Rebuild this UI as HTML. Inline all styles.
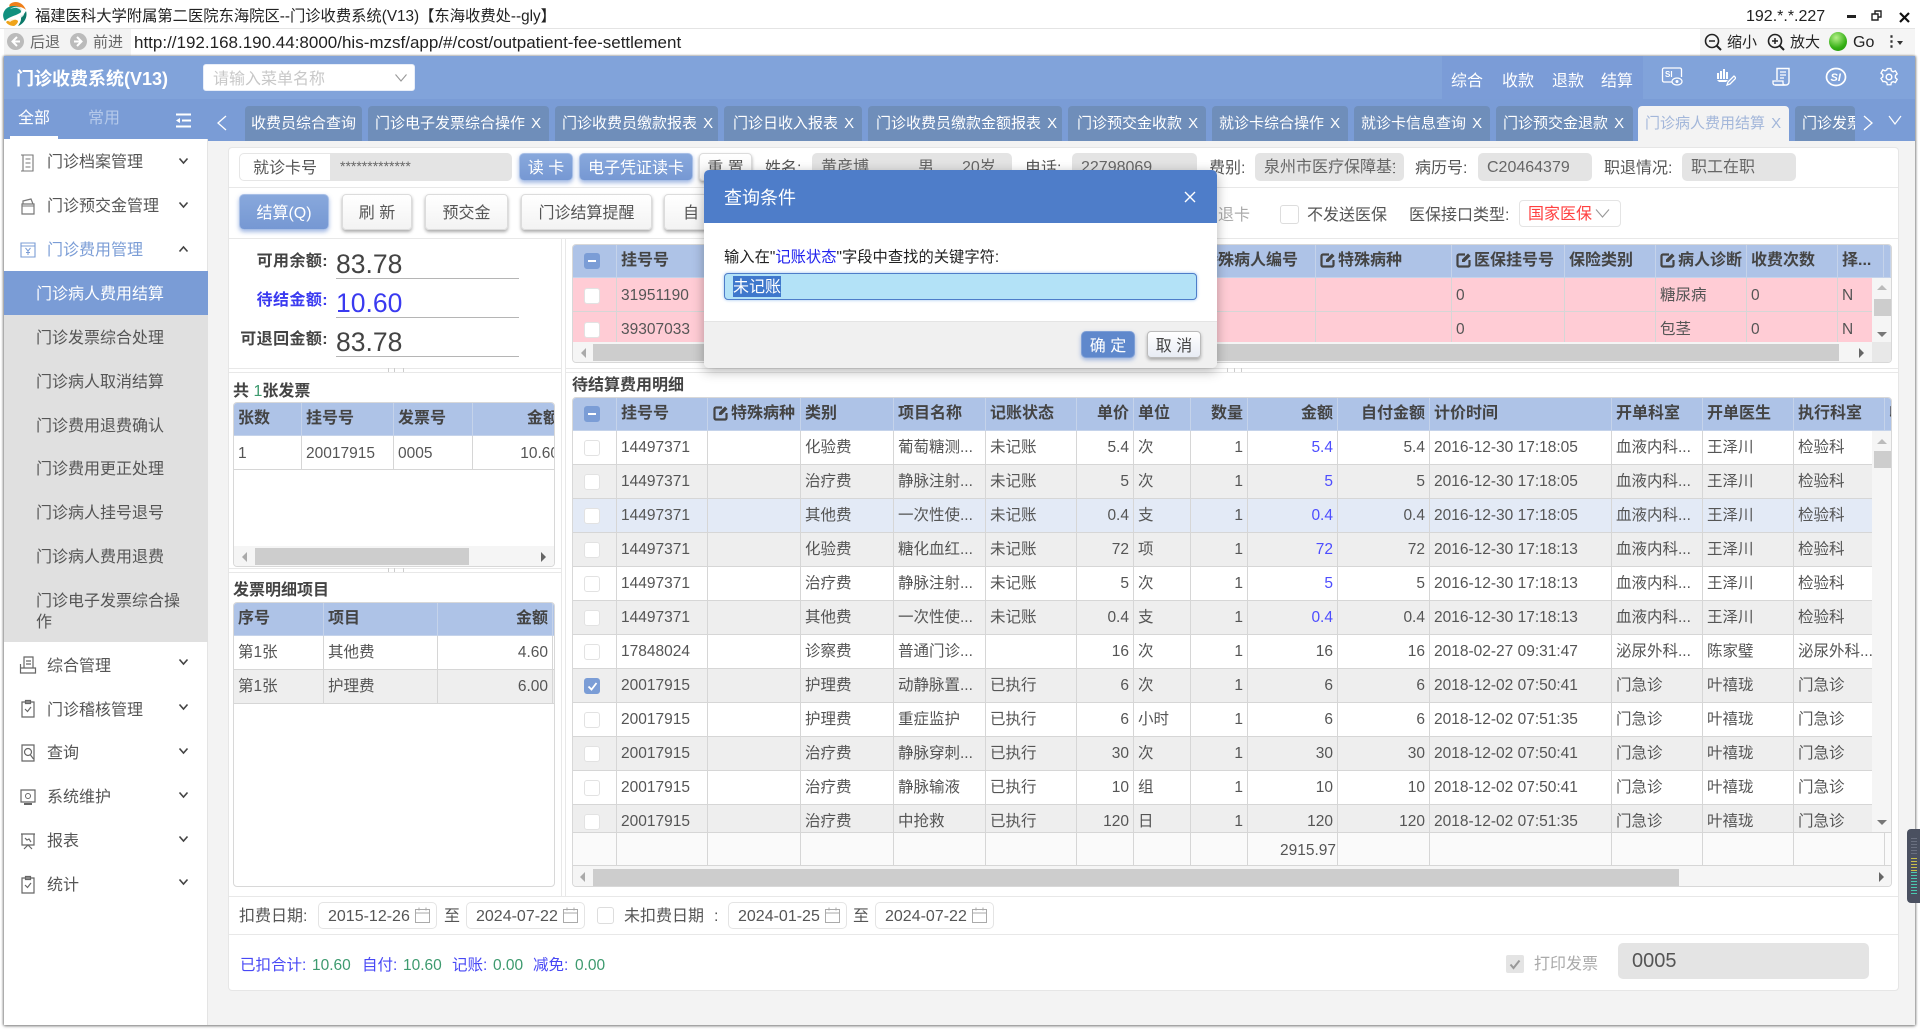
<!DOCTYPE html>
<html lang="zh-CN"><head><meta charset="utf-8"><title>门诊收费系统</title>
<style>
*{box-sizing:border-box}
html,body{margin:0;padding:0;width:1920px;height:1030px;overflow:hidden;background:#fff;font-family:"Liberation Sans","Noto Sans CJK SC",sans-serif;color:#555;font-size:16px}
.a{position:absolute}
.t{position:absolute;white-space:nowrap;line-height:20px;height:20px}
.w{color:#fff}
.tab{position:absolute;top:106px;height:35px;background:#6f8eba;border-radius:4px 4px 0 0;color:#fff;font-size:15px;line-height:36px;white-space:nowrap;overflow:hidden;word-spacing:2px}
.tab span{position:absolute;top:0}
.inp{position:absolute;background:#e4e4e4;border-radius:5px;top:153px;height:28px;color:#666;line-height:30px;padding-left:9px;overflow:hidden;white-space:nowrap}
.bb{position:absolute;background:linear-gradient(#88a8dc,#7698d3);border:1px solid #a8bfe6;border-radius:5px;color:#fff;text-align:center;box-shadow:0 2px 4px rgba(90,130,205,.55)}
.wb{position:absolute;background:linear-gradient(#fff,#f3f3f3);border:1px solid #dcdcdc;border-radius:4px;color:#555;text-align:center;box-shadow:0 2px 3px #aaa}
.menu{position:absolute;left:47px;line-height:22px;height:22px;white-space:nowrap;color:#555}
.sub{position:absolute;left:36px;line-height:22px;white-space:nowrap;color:#555}
.chev{position:absolute;left:178px;width:11px;height:8px}
.ic{position:absolute;left:19px;width:18px;height:20px}
.grid{position:absolute;overflow:hidden}
table{border-collapse:separate;border-spacing:0;table-layout:fixed;position:absolute;left:0}
td,th{height:34px;padding:0 4px;border-right:1px solid #d6d6d6;border-bottom:1px solid #d6d6d6;white-space:nowrap;overflow:hidden;font-size:15.5px;line-height:20px;font-weight:400;text-align:left;color:#555}
th{background:#aec3e7;color:#444;font-size:16px;font-weight:700;border-right:1px solid #c5d3ea;border-bottom:1px solid #c5d3ea;height:33px;padding-bottom:0}
.mh th{padding-bottom:1px}
.pt td{padding-top:2px}
.r{text-align:right}
.g td{background:#eee}
.h td{background:#e3eaf6}
.p td{background:#ffccd5}
.bl{color:#4d4dff}
.cb{display:block;width:16px;height:16px;background:#fff;border:1px solid #e2e2e2;border-radius:3px;margin-left:7px;position:relative}
.cb.m{background:#7b9dd6;border-color:#7b9dd6}
.cb.m:after{content:"";position:absolute;left:3px;top:6px;width:8px;height:2px;background:#fff}
.cb.c{background:#7b9dd6;border-color:#7b9dd6}
td .ed,th .ed{vertical-align:-3px;margin-right:2px}
.sb{position:absolute;background:#cdcdcd}
.date{position:absolute;top:902px;height:27px;background:#fff;border:1px solid #e4e4e4;border-radius:5px;color:#555;line-height:27px;padding-left:9px;width:119px;font-size:16px}
.date svg{position:absolute;left:96px;top:4px}
.gr{color:#3d9a6e}
.blu{color:#4848f5}
.vl{position:absolute;background:#e8e8e8}
.under{position:absolute;left:336px;width:183px;height:1px;background:#b5b5b5}
.bal{position:absolute;right:1592px;white-space:nowrap;font-weight:700;line-height:20px;color:#444;letter-spacing:.4px}
.val{position:absolute;left:336px;font-size:26.5px;line-height:34px;color:#444}
</style></head><body>

<!-- title bar -->
<svg class="a" style="left:2px;top:1px" width="25" height="26" viewBox="0 0 25 26">
<path d="M8 3C13 -1 21 1 24 9 20 5 13 5 9 8 7 6 7 4 8 3z" fill="#ef7f1a"/>
<path d="M3 20C6 16 13 15 18 12 21 10 20 7 17 6 12 4 6 5 3 9 0 13 1 17 3 20z" fill="#11907f"/>
<path d="M24 10C26 16 22 23 16 25 19 21 20 17 18 15 21 14 23 12 24 10z" fill="#0c7a6a"/>
<path d="M4 21C8 17 14 18 16 20 16 22 14 24 12 25 8 25 5 23 4 21z" fill="#efa41a"/>
<path d="M8 8c4-3 9-3 13 0 2 2 2 6-1 8-3 3-9 2-12 5-1-1-2-1-3-1 3-4 10-4 13-7 2-2 1-4-1-5-3-2-6-1-9 0z" fill="#fff" opacity=".85"/>
</svg>
<div class="t" style="left:35px;top:7px;font-size:15.3px;color:#222">福建医科大学附属第二医院东海院区--门诊收费系统(V13)【东海收费处--gly】</div>
<div class="t" style="left:1746px;top:7px;font-size:16px;color:#222">192.*.*.227</div>
<div class="a" style="left:1847px;top:15px;width:9px;height:3px;background:#222"></div>
<svg class="a" style="left:1871px;top:10px" width="11" height="11" viewBox="0 0 11 11"><path d="M1 4h6v6H1zM4 4V1h6v6H7" fill="none" stroke="#222" stroke-width="1.4"/></svg>
<svg class="a" style="left:1899px;top:12px" width="11" height="11" viewBox="0 0 11 11"><path d="M1 1l9 9M10 1l-9 9" stroke="#111" stroke-width="2.2"/></svg>
<div class="a" style="left:0;top:28px;width:1915px;height:1px;background:#e4e4e4"></div>

<!-- address bar -->
<div class="a" style="left:4px;top:29px;width:127px;height:27px;background:#f3f3f3"></div>
<div class="a" style="left:1700px;top:29px;width:215px;height:27px;background:#f5f5f5"></div>
<svg class="a" style="left:6px;top:32px" width="19" height="19" viewBox="0 0 19 19"><circle cx="9.5" cy="9.5" r="8.5" fill="#bbb"/><path d="M11 5L6.5 9.500 11 14" fill="none" stroke="#fff" stroke-width="2"/><path d="M7 9.5h7" stroke="#fff" stroke-width="2"/></svg>
<div class="t" style="left:30px;top:33px;font-size:15px;color:#666">后退</div>
<svg class="a" style="left:69px;top:32px" width="19" height="19" viewBox="0 0 19 19"><circle cx="9.500" cy="9.500" r="8.500" fill="#bbb"/><path d="M8 5l4.500 4.500L8 14" fill="none" stroke="#fff" stroke-width="2"/><path d="M5 9.500h7" stroke="#fff" stroke-width="2"/></svg>
<div class="t" style="left:93px;top:33px;font-size:15px;color:#666">前进</div>
<div class="t" style="left:134px;top:33px;font-size:17px;color:#222">http://192.168.190.44:8000/his-mzsf/app/#/cost/outpatient-fee-settlement</div>
<svg class="a" style="left:1704px;top:33px" width="18" height="18" viewBox="0 0 18 18"><circle cx="8" cy="8" r="6.500" fill="none" stroke="#222" stroke-width="1.600"/><path d="M5 8h6" stroke="#222" stroke-width="1.500"/><path d="M12.500 12.500L17 17" stroke="#222" stroke-width="2"/></svg>
<div class="t" style="left:1727px;top:33px;font-size:15px;color:#222">缩小</div>
<svg class="a" style="left:1767px;top:33px" width="18" height="18" viewBox="0 0 18 18"><circle cx="8" cy="8" r="6.500" fill="none" stroke="#222" stroke-width="1.600"/><path d="M5 8h6M8 5v6" stroke="#222" stroke-width="1.500"/><path d="M12.500 12.500L17 17" stroke="#222" stroke-width="2"/></svg>
<div class="t" style="left:1790px;top:33px;font-size:15px;color:#222">放大</div>
<div class="a" style="left:1829px;top:32px;width:18px;height:19px;border-radius:50%;background:radial-gradient(circle at 40% 30%,#b6f08a,#35b015 60%,#1f8a0a)"></div>
<div class="t" style="left:1853px;top:33px;font-size:16px;color:#222">Go</div>
<div class="t" style="left:1884px;top:32px;font-size:15px;color:#333;font-weight:700">⋮</div>
<div class="a" style="left:1897px;top:41px;border-left:3px solid transparent;border-right:3px solid transparent;border-top:4px solid #333"></div>

<!-- window base -->
<div class="a" style="left:4px;top:56px;width:1911px;height:969px;background:#f3f3f3;box-shadow:0 1px 3px #888,-1px 0 2px #aaa,1px 0 2px #aaa"></div>

<!-- header -->
<div class="a" style="left:4px;top:56px;width:1911px;height:43px;background:#81a3da"></div>
<div class="a" style="left:1442px;top:56px;width:201px;height:43px;background:#7b9cd7"></div>
<div class="t" style="left:16px;top:69px;font-size:18px;font-weight:700;color:#fff;line-height:21px">门诊收费系统(V13)</div>
<div class="a" style="left:203px;top:64px;width:212px;height:27px;background:#fff;border-radius:3px;border:1px solid #e8eef8;color:#c8c8c8;line-height:29px;padding-left:9px">请输入菜单名称
<svg class="a" style="left:191px;top:9px" width="12" height="8" viewBox="0 0 12 8"><path d="M.5.500L6 7 11.500.500" fill="none" stroke="#999" stroke-width="1.100"/></svg></div>
<div class="t w" style="left:1451px;top:72px">综合</div>
<div class="t w" style="left:1502px;top:72px">收款</div>
<div class="t w" style="left:1552px;top:72px">退款</div>
<div class="t w" style="left:1601px;top:72px">结算</div>
<svg class="a" style="left:1661px;top:67px" width="22" height="20" viewBox="0 0 22 20"><path d="M11 15H3a1.500 1.500 0 0 1-1.500-1.500v-11A1.500 1.500 0 0 1 3 1h16a1.500 1.500 0 0 1 1.500 1.500V10" fill="none" stroke="#fff" stroke-width="1.300"/><text x="4" y="10" font-size="8" font-weight="700" fill="#fff" font-family="Liberation Sans">SI</text><ellipse cx="16" cy="14.500" rx="5" ry="3.500" fill="#81a3da" stroke="#fff" stroke-width="1.200"/><circle cx="16" cy="14.500" r="1.500" fill="#fff"/></svg>
<svg class="a" style="left:1716px;top:68px" width="20" height="18" viewBox="0 0 20 18"><path d="M1 5h2v6H1zM4 3h2v8H4zM7 1h2v10H7zM10 4h2v7h-2z" fill="#fff"/><path d="M1 12h11l-2 2H3z" fill="#fff"/><path d="M12 14l6-6 2 2-6 6-3 1z" fill="none" stroke="#fff" stroke-width="1.300"/></svg>
<svg class="a" style="left:1772px;top:67px" width="19" height="20" viewBox="0 0 19 20"><path d="M5 13V1.500h12V15a3 3 0 0 1-3 3H3" fill="none" stroke="#fff" stroke-width="1.400"/><path d="M1 14h10v2a2 2 0 0 0 2 2H3a2 2 0 0 1-2-2zM8 5h6M8 8h6M8 11h4" fill="none" stroke="#fff" stroke-width="1.300"/></svg>
<svg class="a" style="left:1825px;top:67px" width="22" height="20" viewBox="0 0 22 20"><ellipse cx="11" cy="10" rx="9.500" ry="8.500" fill="none" stroke="#fff" stroke-width="1.700"/><text x="5.500" y="14" font-size="11" font-weight="700" font-style="italic" fill="#fff" font-family="Liberation Sans">SI</text></svg>
<svg class="a" style="left:1880px;top:67px" width="18" height="20" viewBox="0 0 18 20"><path d="M7 1.500h4l.5 2.500 2 1 2.500-1 2 3.500-2 1.700v2.600l2 1.700-2 3.500-2.500-1-2 1-.5 2.500H7l-.5-2.500-2-1L2 16l-2-3.500 2-1.700V8.200L0 6.500 2 3l2.500 1 2-1z" transform="translate(1 .2) scale(.9)" fill="none" stroke="#fff" stroke-width="1.500"/><circle cx="9" cy="10" r="2.800" fill="none" stroke="#fff" stroke-width="1.500"/></svg>

<!-- tabs bar -->
<div class="a" style="left:208px;top:99px;width:1707px;height:42px;background:#7a9cd6"></div>
<svg class="a" style="left:216px;top:114px" width="12" height="18" viewBox="0 0 12 18"><path d="M10 2L2 9l8 7" fill="none" stroke="#fff" stroke-width="1.300"/></svg>
<div class="tab" style="left:245px;width:117px"><span style="left:6px">收费员综合查询</span></div>
<div class="tab" style="left:368px;width:181px"><span style="left:7px">门诊电子发票综合操作 X</span></div>
<div class="tab" style="left:555px;width:163px"><span style="left:7px">门诊收费员缴款报表 X</span></div>
<div class="tab" style="left:724px;width:138px"><span style="left:9px">门诊日收入报表 X</span></div>
<div class="tab" style="left:868px;width:194px"><span style="left:8px">门诊收费员缴款金额报表 X</span></div>
<div class="tab" style="left:1068px;width:138px"><span style="left:9px">门诊预交金收款 X</span></div>
<div class="tab" style="left:1212px;width:136px"><span style="left:7px">就诊卡综合操作 X</span></div>
<div class="tab" style="left:1354px;width:136px"><span style="left:7px">就诊卡信息查询 X</span></div>
<div class="tab" style="left:1496px;width:137px"><span style="left:7px">门诊预交金退款 X</span></div>
<div class="tab" style="left:1638px;width:151px;background:#f3f3f3;color:#a3b7da"><span style="left:7px">门诊病人费用结算 X</span></div>
<div class="tab" style="left:1795px;width:60px"><span style="left:7px">门诊发票</span></div>
<svg class="a" style="left:1862px;top:114px" width="12" height="18" viewBox="0 0 12 18"><path d="M2 2l8 7-8 7" fill="none" stroke="#fff" stroke-width="1.300"/></svg>
<svg class="a" style="left:1888px;top:115px" width="14" height="11" viewBox="0 0 14 11"><path d="M1 1l6 8 6-8" fill="none" stroke="#fff" stroke-width="1.200"/></svg>

<!-- sidebar -->
<div class="a" style="left:4px;top:99px;width:204px;height:926px;background:#fff;border-right:1px solid #e4e4e4"></div>
<div class="a" style="left:4px;top:99px;width:204px;height:40px;background:#7a9cd6"></div>
<div class="t w" style="left:18px;top:109px">全部</div>
<div class="t" style="left:88px;top:109px;color:#b5c9ea">常用</div>
<div class="a" style="left:10px;top:136px;width:48px;height:3px;background:#fff"></div>
<svg class="a" style="left:176px;top:113px" width="16" height="15" viewBox="0 0 16 15"><path d="M0 1.500h15M6 7.500h9M0 13.500h15" stroke="#fff" stroke-width="2"/><path d="M4 5L0 7.500 4 10z" fill="#fff"/></svg>

<svg class="ic" style="top:153px" viewBox="0 0 18 20"><path d="M4 2h10v16H4zM6.500 6h5M6.500 10h5M6.500 14h5M2 2h2M2 18h2" fill="none" stroke="#777" stroke-width="1.100"/></svg>
<div class="menu" style="top:152px">门诊档案管理</div>
<svg class="chev" style="top:157px" viewBox="0 0 11 8"><path d="M1.500 1.500L5.500 6l4-4.500" fill="none" stroke="#444" stroke-width="1.600"/></svg>
<svg class="ic" style="top:197px" viewBox="0 0 18 20"><path d="M3 7h12v10H3zM4 7V4l8-2 2 5" fill="none" stroke="#777" stroke-width="1.200"/><path d="M3 9h12" stroke="#777"/></svg>
<div class="menu" style="top:196px">门诊预交金管理</div>
<svg class="chev" style="top:201px" viewBox="0 0 11 8"><path d="M1.500 1.500L5.500 6l4-4.500" fill="none" stroke="#444" stroke-width="1.600"/></svg>
<svg class="ic" style="top:240px" viewBox="0 0 18 20"><path d="M2 3h14v14H2zM2 6h14" fill="none" stroke="#7b9dd6" stroke-width="1.100"/><path d="M6.500 8l2.500 3 2.500-3M9 11v4M7 12.500h4" fill="none" stroke="#7b9dd6"/></svg>
<div class="menu" style="top:240px;color:#7b9dd6">门诊费用管理</div>
<svg class="chev" style="top:245px" viewBox="0 0 11 8"><path d="M1.500 6.500L5.500 2l4 4.500" fill="none" stroke="#444" stroke-width="1.600"/></svg>

<div class="a" style="left:4px;top:271px;width:204px;height:371px;background:#e0e0e0"></div>
<div class="a" style="left:4px;top:271px;width:204px;height:44px;background:#7a9cd6"></div>
<div class="sub" style="top:284px;color:#fff">门诊病人费用结算</div>
<div class="sub" style="top:328px">门诊发票综合处理</div>
<div class="sub" style="top:372px">门诊病人取消结算</div>
<div class="sub" style="top:416px">门诊费用退费确认</div>
<div class="sub" style="top:459px">门诊费用更正处理</div>
<div class="sub" style="top:503px">门诊病人挂号退号</div>
<div class="sub" style="top:547px">门诊病人费用退费</div>
<div class="sub" style="top:591px;white-space:normal;width:150px;line-height:21px">门诊电子发票综合操作</div>

<svg class="ic" style="top:655px" viewBox="0 0 18 20"><path d="M5 2h9v11H5zM1.500 9v9h15v-5h-15M7 6h5M7 9h5" fill="none" stroke="#666" stroke-width="1.200"/></svg>
<div class="menu" style="top:656px">综合管理</div>
<svg class="chev" style="top:658px;" viewBox="0 0 11 8"><path d="M1.500 1.500L5.500 6l4-4.500" fill="none" stroke="#444" stroke-width="1.600"/></svg>
<svg class="ic" style="top:699px" viewBox="0 0 18 20"><path d="M3 3h12v15H3zM6.500 1.500h5v3h-5zM6 10l2.500 2.500L12 8" fill="none" stroke="#666" stroke-width="1.200"/></svg>
<div class="menu" style="top:700px">门诊稽核管理</div>
<svg class="chev" style="top:703px" viewBox="0 0 11 8"><path d="M1.500 1.500L5.500 6l4-4.500" fill="none" stroke="#444" stroke-width="1.600"/></svg>
<svg class="ic" style="top:743px" viewBox="0 0 18 20"><path d="M3 2h12v16H3z" fill="none" stroke="#666" stroke-width="1.200"/><circle cx="9" cy="9" r="3.500" fill="none" stroke="#666" stroke-width="1.200"/><path d="M11.500 12l3 4" stroke="#666" stroke-width="1.200"/></svg>
<div class="menu" style="top:743px">查询</div>
<svg class="chev" style="top:747px" viewBox="0 0 11 8"><path d="M1.500 1.500L5.500 6l4-4.500" fill="none" stroke="#444" stroke-width="1.600"/></svg>
<svg class="ic" style="top:787px" viewBox="0 0 18 20"><path d="M2 3h14v12H2z" fill="none" stroke="#666" stroke-width="1.200"/><circle cx="9" cy="9" r="2.500" fill="none" stroke="#666"/><path d="M5 17h8" stroke="#666" stroke-width="2"/></svg>
<div class="menu" style="top:787px">系统维护</div>
<svg class="chev" style="top:791px" viewBox="0 0 11 8"><path d="M1.500 1.500L5.500 6l4-4.500" fill="none" stroke="#444" stroke-width="1.600"/></svg>
<svg class="ic" style="top:831px" viewBox="0 0 18 20"><path d="M2 3h14M3 3v11h12V3M5 18l4-4 4 4M6 7l2 2 2-1 2 3" fill="none" stroke="#666" stroke-width="1.200"/></svg>
<div class="menu" style="top:831px">报表</div>
<svg class="chev" style="top:835px" viewBox="0 0 11 8"><path d="M1.500 1.500L5.500 6l4-4.500" fill="none" stroke="#444" stroke-width="1.600"/></svg>
<svg class="ic" style="top:875px" viewBox="0 0 18 20"><path d="M3 3h12v15H3zM6.500 1.500h5v3h-5zM6 10l2.500 2.500L12 8" fill="none" stroke="#666" stroke-width="1.200"/></svg>
<div class="menu" style="top:875px">统计</div>
<svg class="chev" style="top:878px" viewBox="0 0 11 8"><path d="M1.500 1.500L5.500 6l4-4.500" fill="none" stroke="#444" stroke-width="1.600"/></svg>

<!-- content card -->
<div class="a" style="left:228px;top:147px;width:1671px;height:844px;background:#fff;border:1px solid #e6e6e6;border-radius:4px"></div>
<div class="vl" style="left:229px;top:187px;width:1669px;height:1px"></div>
<div class="vl" style="left:229px;top:238px;width:1669px;height:1px"></div>
<div class="vl" style="left:229px;top:896px;width:1669px;height:1px"></div>
<div class="vl" style="left:229px;top:934px;width:1669px;height:1px"></div>
<div class="vl" style="left:561px;top:238px;width:1px;height:658px"></div>
<div class="vl" style="left:565px;top:238px;width:1px;height:658px"></div>
<div class="vl" style="left:229px;top:368px;width:332px;height:1px"></div>
<div class="vl" style="left:229px;top:372px;width:332px;height:1px"></div>
<div class="vl" style="left:229px;top:568px;width:332px;height:1px"></div>
<div class="vl" style="left:229px;top:572px;width:332px;height:1px"></div>
<div class="vl" style="left:566px;top:368px;width:1332px;height:1px"></div>
<div class="vl" style="left:566px;top:372px;width:1332px;height:1px"></div>
<div class="vl" style="left:388px;top:368px;width:1px;height:4px;background:#ccc"></div><div class="vl" style="left:394px;top:368px;width:1px;height:4px;background:#ccc"></div><div class="vl" style="left:403px;top:368px;width:1px;height:4px;background:#ccc"></div>
<div class="vl" style="left:388px;top:568px;width:1px;height:4px;background:#ccc"></div><div class="vl" style="left:394px;top:568px;width:1px;height:4px;background:#ccc"></div><div class="vl" style="left:403px;top:568px;width:1px;height:4px;background:#ccc"></div>
<div class="vl" style="left:1227px;top:368px;width:1px;height:4px;background:#ccc"></div><div class="vl" style="left:1234px;top:368px;width:1px;height:4px;background:#ccc"></div><div class="vl" style="left:1241px;top:368px;width:1px;height:4px;background:#ccc"></div>

<!-- row 1 -->
<div class="a" style="left:239px;top:153px;width:92px;height:28px;background:#fff;border:1px solid #e6e6e6;border-radius:5px 0 0 5px;line-height:30px;padding-left:13px;color:#555">就诊卡号</div>
<div class="a" style="left:330px;top:153px;width:182px;height:28px;background:#e4e4e4;border-radius:0 5px 5px 0;color:#666;line-height:26px;padding-left:10px;font-size:14px">*************</div>
<div class="bb" style="left:519px;top:153px;width:54px;height:28px;line-height:30px">读 卡</div>
<div class="bb" style="left:579px;top:153px;width:114px;height:28px;line-height:30px">电子凭证读卡</div>
<div class="wb" style="left:699px;top:153px;width:53px;height:28px;line-height:30px">重 置</div>
<div class="t" style="left:765px;top:159px">姓名:</div>
<div class="inp" style="left:812px;width:200px">黄彦博<span class="a" style="left:106px;top:0">男</span><span class="a" style="left:150px;top:0">20岁</span></div>
<div class="t" style="left:1025px;top:159px">电话:</div>
<div class="inp" style="left:1072px;width:125px">22798069</div>
<div class="t" style="left:1209px;top:159px">费别:</div>
<div class="inp" style="left:1255px;width:149px"><span style="display:block;width:131px;overflow:hidden">泉州市医疗保障基金</span></div>
<div class="t" style="left:1415px;top:159px">病历号:</div>
<div class="inp" style="left:1478px;width:114px">C20464379</div>
<div class="t" style="left:1604px;top:159px">职退情况:</div>
<div class="inp" style="left:1682px;width:114px">职工在职</div>

<!-- row 2 -->
<div class="bb" style="left:239px;top:194px;width:90px;height:36px;line-height:38px">结算(Q)</div>
<div class="wb" style="left:342px;top:194px;width:70px;height:36px;line-height:38px">刷 新</div>
<div class="wb" style="left:425px;top:194px;width:83px;height:36px;line-height:38px">预交金</div>
<div class="wb" style="left:521px;top:194px;width:131px;height:36px;line-height:38px">门诊结算提醒</div>
<div class="wb" style="left:664px;top:194px;width:90px;height:36px;line-height:38px;text-align:left;padding-left:18px">自</div>
<div class="t" style="left:1218px;top:206px;color:#aaa">退卡</div>
<div class="a" style="left:1280px;top:205px;width:19px;height:19px;border:1px solid #ddd;border-radius:3px;background:#fff"></div>
<div class="t" style="left:1307px;top:206px">不发送医保</div>
<div class="t" style="left:1409px;top:206px">医保接口类型:</div>
<div class="a" style="left:1519px;top:200px;width:102px;height:27px;border:1px solid #e4e4e4;border-radius:4px;background:#fff;color:#ff4040;line-height:27px;padding-left:8px">国家医保
<svg class="a" style="left:75px;top:8px" width="15" height="9" viewBox="0 0 15 9"><path d="M1 .500l6.500 7.500L14 .500" fill="none" stroke="#999" stroke-width="1.100"/></svg></div>

<!-- balances -->
<div class="bal" style="top:252px">可用余额:</div>
<div class="val" style="top:247px">83.78</div>
<div class="under" style="top:278px"></div>
<div class="bal" style="top:291px;color:#3a3af0">待结金额:</div>
<div class="val" style="top:286px;color:#3a3af0">10.60</div>
<div class="under" style="top:317px"></div>
<div class="bal" style="top:330px">可退回金额:</div>
<div class="val" style="top:325px">83.78</div>
<div class="under" style="top:356px"></div>

<!-- invoice grid -->
<div class="t" style="left:233px;top:382px;font-weight:700;color:#444">共 <span style="color:#3d9a6e;font-weight:400">1</span>张发票</div>
<div class="grid" style="left:233px;top:402px;width:322px;height:165px;border:1px solid #d8d8d8;border-radius:4px">
<table class="pt" style="width:387px;top:0"><colgroup><col style="width:68px"><col style="width:92px"><col style="width:79px"><col style="width:91px"><col></colgroup>
<tr><th>张数</th><th>挂号号</th><th>发票号</th><th class="r">金额</th><th></th></tr>
<tr><td>1</td><td>20017915</td><td>0005</td><td class="r">10.60</td><td style="border-right:0"></td></tr></table>
<div class="a" style="left:0;top:143px;width:320px;height:20px;background:#f5f5f5"></div>
<div class="sb" style="left:21px;top:145px;width:214px;height:17px"></div>
<div class="a" style="left:8px;top:149px;border-top:5px solid transparent;border-bottom:5px solid transparent;border-right:5px solid #aaa"></div>
<div class="a" style="left:307px;top:149px;border-top:5px solid transparent;border-bottom:5px solid transparent;border-left:5px solid #666"></div>
</div>

<div class="t" style="left:233px;top:581px;font-weight:700;color:#444">发票明细项目</div>
<div class="grid" style="left:233px;top:602px;width:322px;height:285px;border:1px solid #d8d8d8;border-radius:4px">
<table style="width:320px;top:0"><colgroup><col style="width:90px"><col style="width:114px"><col style="width:115px"><col></colgroup>
<tr><th>序号</th><th>项目</th><th class="r">金额</th><th style="border-right:0"></th></tr>
<tr><td>第1张</td><td>其他费</td><td class="r">4.60</td><td style="border-right:0"></td></tr>
<tr class="g"><td>第1张</td><td>护理费</td><td class="r">6.00</td><td style="border-right:0"></td></tr></table>
</div>

<!-- top right grid -->
<div class="grid" style="left:572px;top:244px;width:1320px;height:119px;border:1px solid #d8d8d8;border-radius:4px;background:#f3f3f3">
<table class="pt" style="width:1318px;top:0"><colgroup><col style="width:44px"><col style="width:91px"><col style="width:490px"><col style="width:118px"><col style="width:136px"><col style="width:113px"><col style="width:91px"><col style="width:91px"><col style="width:91px"><col style="width:46px"><col></colgroup>
<tr><th><i class="cb m"></i></th><th>挂号号</th><th></th><th class="r" style="padding-right:26px">特殊病人编号</th><th><svg class="ed" width="16" height="16" viewBox="0 0 16 16"><path d="M9 2.500H3A1.500 1.500 0 0 0 1.500 4v9A1.500 1.500 0 0 0 3 14.500h9a1.500 1.500 0 0 0 1.500-1.500V8" fill="none" stroke="#444" stroke-width="2.200"/><path d="M6 10V7.500L12 1.500 14.500 4 8.500 10z" fill="#444"/></svg>特殊病种</th><th><svg class="ed" width="16" height="16" viewBox="0 0 16 16"><path d="M9 2.500H3A1.500 1.500 0 0 0 1.500 4v9A1.500 1.500 0 0 0 3 14.500h9a1.500 1.500 0 0 0 1.500-1.500V8" fill="none" stroke="#444" stroke-width="2.200"/><path d="M6 10V7.500L12 1.500 14.500 4 8.500 10z" fill="#444"/></svg>医保挂号号</th><th>保险类别</th><th><svg class="ed" width="16" height="16" viewBox="0 0 16 16"><path d="M9 2.500H3A1.500 1.500 0 0 0 1.500 4v9A1.500 1.500 0 0 0 3 14.500h9a1.500 1.500 0 0 0 1.500-1.500V8" fill="none" stroke="#444" stroke-width="2.200"/><path d="M6 10V7.500L12 1.500 14.500 4 8.500 10z" fill="#444"/></svg>病人诊断</th><th>收费次数</th><th>择...</th><th></th></tr>
<tr class="p"><td><i class="cb"></i></td><td>31951190</td><td></td><td></td><td></td><td>0</td><td></td><td>糖尿病</td><td>0</td><td>N</td><td></td></tr>
<tr class="p"><td><i class="cb"></i></td><td>39307033</td><td></td><td></td><td></td><td>0</td><td></td><td>包茎</td><td>0</td><td>N</td><td></td></tr></table>
<div class="a" style="left:1299px;top:33px;width:20px;height:85px;background:#f5f5f5"></div>
<div class="a" style="left:1304px;top:40px;border-left:5px solid transparent;border-right:5px solid transparent;border-bottom:5px solid #bbb"></div>
<div class="sb" style="left:1301px;top:54px;width:17px;height:17px"></div>
<div class="a" style="left:1304px;top:87px;border-left:5px solid transparent;border-right:5px solid transparent;border-top:5px solid #777"></div>
<div class="a" style="left:0;top:97px;width:1318px;height:21px;background:#f5f5f5"></div>
<div class="sb" style="left:20px;top:99px;width:1246px;height:17px"></div>
<div class="a" style="left:8px;top:103px;border-top:5px solid transparent;border-bottom:5px solid transparent;border-right:5px solid #aaa"></div>
<div class="a" style="left:1286px;top:103px;border-top:5px solid transparent;border-bottom:5px solid transparent;border-left:5px solid #666"></div>
<div class="a" style="left:1299px;top:97px;width:20px;height:21px;background:#e8e8e8"></div>
</div>

<!-- main grid -->
<div class="t" style="left:572px;top:376px;font-weight:700;color:#444">待结算费用明细</div>
<div class="grid" style="left:572px;top:397px;width:1320px;height:490px;border:1px solid #d8d8d8;border-radius:4px;background:#fff">
<table class="mh" style="width:1340px;top:0"><colgroup><col style="width:44px"><col style="width:91px"><col style="width:93px"><col style="width:93px"><col style="width:92px"><col style="width:91px"><col style="width:57px"><col style="width:57px"><col style="width:57px"><col style="width:90px"><col style="width:92px"><col style="width:182px"><col style="width:91px"><col style="width:91px"><col style="width:91px"><col></colgroup>
<tr><th><i class="cb m"></i></th><th>挂号号</th><th style="padding-left:5px"><svg class="ed" width="16" height="16" viewBox="0 0 16 16"><path d="M9 2.500H3A1.500 1.500 0 0 0 1.500 4v9A1.500 1.500 0 0 0 3 14.500h9a1.500 1.500 0 0 0 1.500-1.500V8" fill="none" stroke="#444" stroke-width="2.200"/><path d="M6 10V7.500L12 1.500 14.500 4 8.500 10z" fill="#444"/></svg>特殊病种</th><th>类别</th><th>项目名称</th><th>记账状态</th><th class="r">单价</th><th>单位</th><th class="r">数量</th><th class="r">金额</th><th class="r">自付金额</th><th>计价时间</th><th>开单科室</th><th>开单医生</th><th>执行科室</th><th>收费</th></tr>
</table>
<div class="a" style="left:0;top:33px;width:1299px;height:402px;overflow:hidden">
<table style="width:1312px;top:0"><colgroup><col style="width:44px"><col style="width:91px"><col style="width:93px"><col style="width:93px"><col style="width:92px"><col style="width:91px"><col style="width:57px"><col style="width:57px"><col style="width:57px"><col style="width:90px"><col style="width:92px"><col style="width:182px"><col style="width:91px"><col style="width:91px"><col style="width:91px"></colgroup>
<tr><td><i class="cb"></i></td><td>14497371</td><td></td><td>化验费</td><td>葡萄糖测...</td><td>未记账</td><td class="r">5.4</td><td>次</td><td class="r">1</td><td class="r bl">5.4</td><td class="r">5.4</td><td>2016-12-30 17:18:05</td><td>血液内科...</td><td>王泽川</td><td>检验科</td></tr>
<tr class="g"><td><i class="cb"></i></td><td>14497371</td><td></td><td>治疗费</td><td>静脉注射...</td><td>未记账</td><td class="r">5</td><td>次</td><td class="r">1</td><td class="r bl">5</td><td class="r">5</td><td>2016-12-30 17:18:05</td><td>血液内科...</td><td>王泽川</td><td>检验科</td></tr>
<tr class="h"><td><i class="cb"></i></td><td>14497371</td><td></td><td>其他费</td><td>一次性使...</td><td>未记账</td><td class="r">0.4</td><td>支</td><td class="r">1</td><td class="r bl">0.4</td><td class="r">0.4</td><td>2016-12-30 17:18:05</td><td>血液内科...</td><td>王泽川</td><td>检验科</td></tr>
<tr class="g"><td><i class="cb"></i></td><td>14497371</td><td></td><td>化验费</td><td>糖化血红...</td><td>未记账</td><td class="r">72</td><td>项</td><td class="r">1</td><td class="r bl">72</td><td class="r">72</td><td>2016-12-30 17:18:13</td><td>血液内科...</td><td>王泽川</td><td>检验科</td></tr>
<tr><td><i class="cb"></i></td><td>14497371</td><td></td><td>治疗费</td><td>静脉注射...</td><td>未记账</td><td class="r">5</td><td>次</td><td class="r">1</td><td class="r bl">5</td><td class="r">5</td><td>2016-12-30 17:18:13</td><td>血液内科...</td><td>王泽川</td><td>检验科</td></tr>
<tr class="g"><td><i class="cb"></i></td><td>14497371</td><td></td><td>其他费</td><td>一次性使...</td><td>未记账</td><td class="r">0.4</td><td>支</td><td class="r">1</td><td class="r bl">0.4</td><td class="r">0.4</td><td>2016-12-30 17:18:13</td><td>血液内科...</td><td>王泽川</td><td>检验科</td></tr>
<tr><td><i class="cb"></i></td><td>17848024</td><td></td><td>诊察费</td><td>普通门诊...</td><td></td><td class="r">16</td><td>次</td><td class="r">1</td><td class="r">16</td><td class="r">16</td><td>2018-02-27 09:31:47</td><td>泌尿外科...</td><td>陈家璧</td><td>泌尿外科...</td></tr>
<tr class="g"><td><i class="cb c"><svg class="a" style="left:2px;top:2px" width="11" height="11" viewBox="0 0 11 11"><path d="M1.500 5.500L4.500 8.500 9.500 2" fill="none" stroke="#fff" stroke-width="1.800"/></svg></i></td><td>20017915</td><td></td><td>护理费</td><td>动静脉置...</td><td>已执行</td><td class="r">6</td><td>次</td><td class="r">1</td><td class="r">6</td><td class="r">6</td><td>2018-12-02 07:50:41</td><td>门急诊</td><td>叶禧珑</td><td>门急诊</td></tr>
<tr><td><i class="cb"></i></td><td>20017915</td><td></td><td>护理费</td><td>重症监护</td><td>已执行</td><td class="r">6</td><td>小时</td><td class="r">1</td><td class="r">6</td><td class="r">6</td><td>2018-12-02 07:51:35</td><td>门急诊</td><td>叶禧珑</td><td>门急诊</td></tr>
<tr class="g"><td><i class="cb"></i></td><td>20017915</td><td></td><td>治疗费</td><td>静脉穿刺...</td><td>已执行</td><td class="r">30</td><td>次</td><td class="r">1</td><td class="r">30</td><td class="r">30</td><td>2018-12-02 07:50:41</td><td>门急诊</td><td>叶禧珑</td><td>门急诊</td></tr>
<tr><td><i class="cb"></i></td><td>20017915</td><td></td><td>治疗费</td><td>静脉输液</td><td>已执行</td><td class="r">10</td><td>组</td><td class="r">1</td><td class="r">10</td><td class="r">10</td><td>2018-12-02 07:50:41</td><td>门急诊</td><td>叶禧珑</td><td>门急诊</td></tr>
<tr class="g"><td><i class="cb"></i></td><td>20017915</td><td></td><td>治疗费</td><td>中抢救</td><td>已执行</td><td class="r">120</td><td>日</td><td class="r">1</td><td class="r">120</td><td class="r">120</td><td>2018-12-02 07:51:35</td><td>门急诊</td><td>叶禧珑</td><td>门急诊</td></tr>
</table></div>
<div class="a" style="left:1299px;top:33px;width:20px;height:402px;background:#f5f5f5"></div>
<div class="a" style="left:1304px;top:41px;border-left:5px solid transparent;border-right:5px solid transparent;border-bottom:5px solid #bbb"></div>
<div class="sb" style="left:1301px;top:53px;width:17px;height:17px"></div>
<div class="a" style="left:1304px;top:422px;border-left:5px solid transparent;border-right:5px solid transparent;border-top:5px solid #777"></div>
<!-- footer row -->
<div class="a" style="left:0;top:434px;width:1319px;height:34px;overflow:hidden;background:#fafafa;border-top:1px solid #d6d6d6;border-bottom:1px solid #d6d6d6">
<table style="width:1312px;top:0"><colgroup><col style="width:44px"><col style="width:91px"><col style="width:93px"><col style="width:93px"><col style="width:92px"><col style="width:91px"><col style="width:57px"><col style="width:57px"><col style="width:57px"><col style="width:90px"><col style="width:92px"><col style="width:182px"><col style="width:91px"><col style="width:91px"><col style="width:91px"></colgroup>
<tr><td style="background:#fafafa"></td><td style="background:#fafafa"></td><td style="background:#fafafa"></td><td style="background:#fafafa"></td><td style="background:#fafafa"></td><td style="background:#fafafa"></td><td style="background:#fafafa"></td><td style="background:#fafafa"></td><td style="background:#fafafa"></td><td class="r" style="background:#fafafa;padding-right:1px;padding-top:2px">2915.97</td><td style="background:#fafafa"></td><td style="background:#fafafa"></td><td style="background:#fafafa"></td><td style="background:#fafafa"></td><td style="background:#fafafa"></td></tr></table></div>
<div class="a" style="left:0;top:468px;width:1319px;height:20px;background:#f5f5f5"></div>
<div class="sb" style="left:20px;top:471px;width:1086px;height:17px"></div>
<div class="a" style="left:7px;top:474px;border-top:5px solid transparent;border-bottom:5px solid transparent;border-right:5px solid #aaa"></div>
<div class="a" style="left:1306px;top:474px;border-top:5px solid transparent;border-bottom:5px solid transparent;border-left:5px solid #666"></div>
</div>

<!-- date row -->
<div class="t" style="left:239px;top:907px">扣费日期:</div>
<div class="date" style="left:318px">2015-12-26<svg width="15" height="16" viewBox="0 0 15 16"><path d="M.500 2.500h14v13H.500zM.500 6h14M4 .500v3M11 .500v3" fill="none" stroke="#aaa"/></svg></div>
<div class="t" style="left:444px;top:907px">至</div>
<div class="date" style="left:466px">2024-07-22<svg width="15" height="16" viewBox="0 0 15 16"><path d="M.500 2.500h14v13H.500zM.500 6h14M4 .500v3M11 .500v3" fill="none" stroke="#aaa"/></svg></div>
<div class="a" style="left:597px;top:907px;width:17px;height:17px;border:1px solid #ddd;border-radius:3px"></div>
<div class="t" style="left:624px;top:907px">未扣费日期</div>
<div class="t" style="left:714px;top:907px">:</div>
<div class="date" style="left:728px">2024-01-25<svg width="15" height="16" viewBox="0 0 15 16"><path d="M.500 2.500h14v13H.500zM.500 6h14M4 .500v3M11 .500v3" fill="none" stroke="#aaa"/></svg></div>
<div class="t" style="left:853px;top:907px">至</div>
<div class="date" style="left:875px">2024-07-22<svg width="15" height="16" viewBox="0 0 15 16"><path d="M.500 2.500h14v13H.500zM.500 6h14M4 .500v3M11 .500v3" fill="none" stroke="#aaa"/></svg></div>

<!-- summary -->
<div class="t blu" style="left:240px;top:956px;font-size:15.500px">已扣合计:</div><div class="t gr" style="left:312px;top:956px;font-size:15.500px">10.60</div>
<div class="t blu" style="left:362px;top:956px;font-size:15.500px">自付:</div><div class="t gr" style="left:403px;top:956px;font-size:15.500px">10.60</div>
<div class="t blu" style="left:452px;top:956px;font-size:15.500px">记账:</div><div class="t gr" style="left:493px;top:956px;font-size:15.500px">0.00</div>
<div class="t blu" style="left:533px;top:956px;font-size:15.500px">减免:</div><div class="t gr" style="left:575px;top:956px;font-size:15.500px">0.00</div>
<div class="a" style="left:1506px;top:955px;width:18px;height:18px;background:#e4e4e4;border-radius:2px"></div>
<svg class="a" style="left:1509px;top:959px" width="12" height="11" viewBox="0 0 12 11"><path d="M1.500 5.500L4.500 9 10.500 1.500" fill="none" stroke="#999" stroke-width="2"/></svg>
<div class="t" style="left:1534px;top:955px;color:#aaa">打印发票</div>
<div class="a" style="left:1618px;top:943px;width:251px;height:36px;background:#e4e4e4;border-radius:5px;font-size:20px;color:#555;line-height:37px;padding-left:14px">0005</div>

<!-- right edge widget -->
<div class="a" style="left:1907px;top:829px;width:13px;height:74px;background:#4a5060;border-radius:4px 0 0 4px"></div>
<div class="a" style="left:1911px;top:838px;width:6px;height:18px;background:repeating-linear-gradient(#6a7080 0 1px,#4a5060 1px 3px)"></div>
<div class="a" style="left:1911px;top:858px;width:6px;height:14px;background:repeating-linear-gradient(#c9c04a 0 1px,#4a5060 1px 3px)"></div>
<div class="a" style="left:1911px;top:872px;width:6px;height:22px;background:repeating-linear-gradient(#4ac9b0 0 1px,#4a5060 1px 3px)"></div>

<!-- dialog -->
<div class="a" style="left:704px;top:170px;width:513px;height:198px;background:#fff;border-radius:5px;box-shadow:0 3px 12px rgba(0,0,0,.3);overflow:hidden">
<div class="a" style="left:0;top:0;width:513px;height:53px;background:#4e7dc9"></div>
<div class="t" style="left:20px;top:17px;font-size:18px;color:#fff;line-height:22px;height:22px">查询条件</div>
<svg class="a" style="left:480px;top:21px" width="12" height="12" viewBox="0 0 12 12"><path d="M1 1l10 10M11 1L1 11" stroke="#fff" stroke-width="1.400"/></svg>
<div class="t" style="left:20px;top:78px;font-size:15.300px;color:#222">输入在"<span style="color:#2222ee">记账状态</span>"字段中查找的关键字符:</div>
<div class="a" style="left:20px;top:103px;width:473px;height:27px;background:#b3e2f7;border:1px solid #4e7dc9;border-radius:4px;box-shadow:0 0 3px #9cc4ee"></div>
<div class="a" style="left:29px;top:106px;width:48px;height:21px;background:#3f78cc;color:#fff;line-height:23px;white-space:nowrap">未记账</div>
<div class="a" style="left:0;top:151px;width:513px;height:47px;background:#f0f0f0;border-top:1px solid #e4e4e4"></div>
<div class="bb" style="left:377px;top:161px;width:54px;height:27px;line-height:29px;background:#5f88cc;border-color:#7e9fd6">确 定</div>
<div class="wb" style="left:443px;top:161px;width:54px;height:27px;line-height:29px;border-color:#bbb;color:#444;background:linear-gradient(#fff,#e8ecf4)">取 消</div>
</div>

</body></html>
